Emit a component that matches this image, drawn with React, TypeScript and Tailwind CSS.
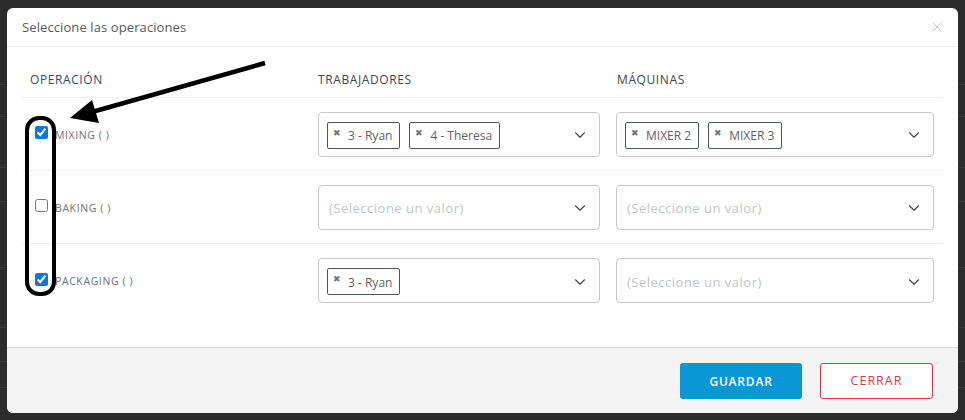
import { ChevronDown, X } from 'lucide-react';

interface Row {
  name: string;
  checked: boolean;
  workers: string[];
  machines: string[];
}

const rows: Row[] = [
  { name: 'MIXING ( )', checked: true, workers: ['3 - Ryan', '4 - Theresa'], machines: ['MIXER 2', 'MIXER 3'] },
  { name: 'BAKING ( )', checked: false, workers: [], machines: [] },
  { name: 'PACKAGING ( )', checked: true, workers: ['3 - Ryan'], machines: [] },
];

function Tag({ label }: { label: string }) {
  return (
    <span className="flex h-[27px] items-center gap-[7px] rounded-[2px] border border-[#4d5360] pl-[5px] pr-[7px] text-[12px] text-[#5a5f69]">
      <span className="-mt-[6px] text-[9px] leading-none text-[#707480]">✖</span>
      <span className="mt-[2px]">{label}</span>
    </span>
  );
}

function MultiSelect({ values }: { values: string[] }) {
  return (
    <div className="flex h-[45px] items-center rounded-[4px] border border-[#c6c8cc] bg-white pl-[8px] pr-[10px]">
      <div className="flex flex-1 items-center gap-[9px] pt-[2px]">
        {values.length === 0 ? (
          <span className="mt-[2px] pl-[2px] text-[13px] tracking-[0.5px] text-[#c2c4c8]">(Seleccione un valor)</span>
        ) : (
          values.map((v) => <Tag key={v} label={v} />)
        )}
      </div>
      <ChevronDown className="mt-[2px] h-[18px] w-[18px] text-[#3c414b]" strokeWidth={1.5} />
    </div>
  );
}

export default function App() {
  return (
    <div
      className="relative h-[420px] w-[965px] overflow-hidden bg-[#2c2c2c]"
      style={{ fontFamily: '"Open Sans", "Noto Sans", sans-serif' }}
    >
      {/* page behind the backdrop */}
      <div className="flex flex-col">
        <div className="h-[85px] border-b border-[#3a3a3a]" />
        <div className="h-[32px] border-b border-[#3a3a3a]" />
        <div className="h-[51px] border-b border-[#3a3a3a]" />
        <div className="h-[34px] border-b border-[#3a3a3a]" />
        <div className="h-[66px] border-b border-[#3a3a3a]" />
        <div className="h-[60px] border-b border-[#3a3a3a]" />
        <div className="h-[34px] border-b border-[#3a3a3a]" />
        <div className="h-[26px] border-b border-[#3a3a3a]" />
      </div>

      {/* modal */}
      <div className="absolute left-[7px] top-[8px] flex h-[405px] w-[951px] flex-col overflow-hidden rounded-[6px] bg-white">
        <div className="flex h-[39px] items-center justify-between border-b border-[#ececec] pl-[15px] pr-[13px]">
          <span className="mt-[1px] text-[13px] tracking-[0.1px] text-[#555a62]">Seleccione las operaciones</span>
          <X className="h-[16px] w-[16px] text-[#bdbdbd]" strokeWidth={1.3} />
        </div>

        <div className="flex-1 px-[15px] pt-[13px]">
          <div className="grid h-[38px] grid-cols-[288px_297px_1fr] items-center border-b border-[#eeeeee] text-[12px] tracking-[0.6px]">
            <span className="mt-[2px] px-[8px] text-[#36476a]">OPERACIÓN</span>
            <span className="mt-[2px] px-[8px] text-[#40444c]">TRABAJADORES</span>
            <span className="mt-[2px] px-[10px] text-[#40444c]">MÁQUINAS</span>
          </div>
          {rows.map((r, i) => (
            <div
              key={r.name}
              className={
                'grid h-[73px] grid-cols-[288px_297px_1fr] items-center ' +
                (i < rows.length - 1 ? 'border-b border-[#eeeeee]' : '')
              }
            >
              <label className="flex items-center gap-[7px] pl-[13px]">
                <input type="checkbox" defaultChecked={r.checked} className="m-0 -mt-[3px] h-[13px] w-[13px] accent-[#0a75f0]" />
                <span className="mt-[3px] text-[10.5px] tracking-[0.6px] text-[#6b6f77]">{r.name}</span>
              </label>
              <div className="pl-[8px]">
                <div className="w-[282px]">
                  <MultiSelect values={r.workers} />
                </div>
              </div>
              <div className="pl-[9px] pr-[9px]">
                <MultiSelect values={r.machines} />
              </div>
            </div>
          ))}
        </div>

        <div className="flex h-[66px] items-center justify-end gap-[18px] border-t border-[#dcdcdc] bg-[#f4f4f4] pr-[25px]">
          <button className="h-[36px] w-[122px] rounded-[3px] bg-[#0896d7] pt-[2px] text-[12px] font-semibold tracking-[0.8px] text-white">
            GUARDAR
          </button>
          <button className="h-[36px] w-[113px] rounded-[3px] border border-[#dc3545] bg-white pt-[2px] text-[12.5px] tracking-[1px] text-[#dc3545]">
            CERRAR
          </button>
        </div>
      </div>

      {/* annotation drawn over the screenshot */}
      <svg className="pointer-events-none absolute left-0 top-0" width="965" height="420">
        <line x1="265" y1="63" x2="92" y2="112" stroke="black" strokeWidth="4.5" />
        <polygon points="70,118 99,123 92,100" fill="black" />
        <rect x="27" y="118" width="27" height="176" rx="12" fill="none" stroke="black" strokeWidth="4" />
      </svg>
    </div>
  );
}
